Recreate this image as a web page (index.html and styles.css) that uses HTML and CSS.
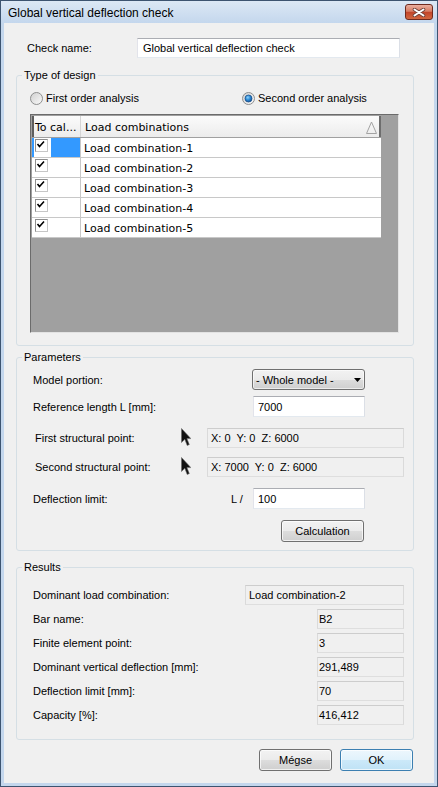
FILE: index.html
```html
<!DOCTYPE html>
<html lang="en">
<head>
  <meta charset="UTF-8">
  <meta name="viewport" content="width=device-width, initial-scale=1.0">
  <title>Global vertical deflection check</title>
  <link rel="stylesheet" href="styles.css">
</head>
<body>

  <div class="window">

    <!-- Title bar -->
    <div class="titlebar">
      <span class="title">Global vertical deflection check</span>
      <span class="close-btn">
        <svg width="14" height="9" viewBox="0 0 14 9">
          <path d="M2.5 1.5 L11.5 7.5 M11.5 1.5 L2.5 7.5" stroke="#6b4038" stroke-width="3.6" stroke-linecap="round"/>
          <path d="M2.5 1.5 L11.5 7.5 M11.5 1.5 L2.5 7.5" stroke="#fff" stroke-width="2" stroke-linecap="round"/>
        </svg>
      </span>
    </div>

    <div class="client">

      <!-- Check name -->
      <div class="name-row">
        <span class="name-label">Check name:</span>
        <div class="textbox name-box">Global vertical deflection check</div>
      </div>

      <!-- Type of design -->
      <div class="group design-group">
        <div class="group-title">Type of design</div>
        <div class="radio-row">
          <label class="radio-option first-radio">
            <svg width="13" height="13" viewBox="0 0 13 13">
              <defs>
                <linearGradient id="radioFill" x1="0" y1="0" x2="1" y2="1">
                  <stop offset="0" stop-color="#cfcfcf"/>
                  <stop offset="1" stop-color="#fbfbfb"/>
                </linearGradient>
              </defs>
              <circle cx="6.5" cy="6.5" r="6" fill="url(#radioFill)" stroke="#8e8f8f"/>
            </svg>
            First order analysis
          </label>
          <label class="radio-option">
            <svg width="13" height="13" viewBox="0 0 13 13">
              <defs>
                <radialGradient id="radioDot" cx="0.4" cy="0.35" r="0.7">
                  <stop offset="0" stop-color="#8fd3fb"/>
                  <stop offset="0.5" stop-color="#2c8ad6"/>
                  <stop offset="1" stop-color="#104f93"/>
                </radialGradient>
              </defs>
              <circle cx="6.5" cy="6.5" r="6" fill="url(#radioFill)" stroke="#8e8f8f"/>
              <circle cx="6.5" cy="6.5" r="3.5" fill="url(#radioDot)" stroke="#1b4f8a" stroke-width="0.8"/>
            </svg>
            Second order analysis
          </label>
        </div>

        <div class="grid">
          <div class="grid-header">
            <div class="col-check">To cal...</div>
            <div class="col-name">
              Load combinations
              <svg class="sort-arrow" width="11" height="13" viewBox="0 0 11 13">
                <polygon points="5.5,1 10.5,12.5 0.5,12.5" fill="none" stroke="#a3a3a3"/>
              </svg>
            </div>
          </div>

          <div class="grid-row selected">
            <div class="col-check">
              <span class="checkbox"><svg width="11" height="11" viewBox="0 0 11 11"><path d="M1.5 4 L3.5 6.5 L8 1.5" fill="none" stroke="#000" stroke-width="1.6"/></svg></span>
              <span class="sel-mark"></span>
            </div>
            <div class="col-name">Load combination-1</div>
          </div>
          <div class="grid-row">
            <div class="col-check">
              <span class="checkbox"><svg width="11" height="11" viewBox="0 0 11 11"><path d="M1.5 4 L3.5 6.5 L8 1.5" fill="none" stroke="#000" stroke-width="1.6"/></svg></span>
            </div>
            <div class="col-name">Load combination-2</div>
          </div>
          <div class="grid-row">
            <div class="col-check">
              <span class="checkbox"><svg width="11" height="11" viewBox="0 0 11 11"><path d="M1.5 4 L3.5 6.5 L8 1.5" fill="none" stroke="#000" stroke-width="1.6"/></svg></span>
            </div>
            <div class="col-name">Load combination-3</div>
          </div>
          <div class="grid-row">
            <div class="col-check">
              <span class="checkbox"><svg width="11" height="11" viewBox="0 0 11 11"><path d="M1.5 4 L3.5 6.5 L8 1.5" fill="none" stroke="#000" stroke-width="1.6"/></svg></span>
            </div>
            <div class="col-name">Load combination-4</div>
          </div>
          <div class="grid-row">
            <div class="col-check">
              <span class="checkbox"><svg width="11" height="11" viewBox="0 0 11 11"><path d="M1.5 4 L3.5 6.5 L8 1.5" fill="none" stroke="#000" stroke-width="1.6"/></svg></span>
            </div>
            <div class="col-name">Load combination-5</div>
          </div>
        </div>
      </div>

      <!-- Parameters -->
      <div class="group param-group">
        <div class="group-title">Parameters</div>

        <div class="param-row model-row">
          <span class="param-label">Model portion:</span>
          <div class="dropdown">
            - Whole model -
            <svg class="drop-arrow" width="7" height="4" viewBox="0 0 7 4"><polygon points="0,0 7,0 3.5,4" fill="#000"/></svg>
          </div>
        </div>

        <div class="param-row length-row">
          <span class="param-label">Reference length L [mm]:</span>
          <div class="textbox short-input">7000</div>
        </div>

        <div class="param-row point-row first-point">
          <span class="param-label">First structural point:</span>
          <span class="pick-icon">
            <svg width="10" height="19" viewBox="0 0 10 19"><polygon points="0.5,0.5 0.5,14.5 3.8,11.3 6.2,17.5 8.3,16.6 5.9,10.6 9.8,10.6" fill="#111" stroke="#6a6a6a" stroke-width="0.6"/></svg>
          </span>
          <div class="readonly point-box">X: 0  Y: 0  Z: 6000</div>
        </div>

        <div class="param-row point-row second-point">
          <span class="param-label">Second structural point:</span>
          <span class="pick-icon">
            <svg width="10" height="19" viewBox="0 0 10 19"><polygon points="0.5,0.5 0.5,14.5 3.8,11.3 6.2,17.5 8.3,16.6 5.9,10.6 9.8,10.6" fill="#111" stroke="#6a6a6a" stroke-width="0.6"/></svg>
          </span>
          <div class="readonly point-box">X: 7000  Y: 0  Z: 6000</div>
        </div>

        <div class="param-row limit-row">
          <span class="param-label">Deflection limit:</span>
          <span class="l-prefix">L /</span>
          <div class="textbox short-input">100</div>
        </div>

        <div class="param-row calc-row">
          <div class="button calc-btn">Calculation</div>
        </div>
      </div>

      <!-- Results -->
      <div class="group results-group">
        <div class="group-title">Results</div>
        <div class="result-list">
          <div class="result-row">
            <span>Dominant load combination:</span>
            <div class="readonly wide">Load combination-2</div>
          </div>
          <div class="result-row">
            <span>Bar name:</span>
            <div class="readonly narrow">B2</div>
          </div>
          <div class="result-row">
            <span>Finite element point:</span>
            <div class="readonly narrow">3</div>
          </div>
          <div class="result-row">
            <span>Dominant vertical deflection [mm]:</span>
            <div class="readonly narrow">291,489</div>
          </div>
          <div class="result-row">
            <span>Deflection limit [mm]:</span>
            <div class="readonly narrow">70</div>
          </div>
          <div class="result-row">
            <span>Capacity [%]:</span>
            <div class="readonly narrow">416,412</div>
          </div>
        </div>
      </div>

      <!-- Dialog buttons -->
      <div class="button-row">
        <div class="button">Mégse</div>
        <div class="button default">OK</div>
      </div>

    </div>
  </div>

</body>
</html>
```

FILE: styles.css
```css
/* Reset */
* {
  margin: 0;
  padding: 0;
  box-sizing: border-box;
}

body {
  font-family: "Liberation Sans", Arial, sans-serif;
  font-size: 11px;
  color: #000;
  background: #f0f0f0;
}

/* Window frame */
.window {
  width: 438px;
  height: 787px;
  display: flex;
  flex-direction: column;
  border: 1px solid #3d5470;
  background: #c4d7ed;
  padding: 0 3px 3px;
}

.titlebar {
  height: 22px;
  flex-shrink: 0;
  margin: 0 -3px;
  padding: 0 4px 0 7px;
  display: flex;
  justify-content: space-between;
  align-items: flex-start;
  background: linear-gradient(#dce8f5, #c4d7ed);
}

.title {
  font-size: 12px;
  line-height: 24px;
}

.close-btn {
  width: 28px;
  height: 16px;
  margin-top: 3px;
  border: 1px solid #6e2a1e;
  border-radius: 3px;
  background: linear-gradient(#eab0a0, #d77c63 45%, #c2452a 52%, #d2673f);
  display: flex;
  align-items: center;
  justify-content: center;
}

.client {
  flex: 1;
  background: #f0f0f0;
  padding: 15px 21px 0 12px;
  display: flex;
  flex-direction: column;
}

/* Inputs */
.textbox {
  background: #fff;
  border: 1px solid;
  border-color: #abadb3 #dbdfe6 #e3e9ef #e2e3ea;
  padding-left: 4px;
  display: flex;
  align-items: center;
}

.readonly {
  background: #f0f0f0;
  border: 1px solid;
  border-color: #cdcdcd #dadada #dedede #dadada;
  padding-left: 3px;
  display: flex;
  align-items: center;
  white-space: pre;
}

.readonly.wide {
  width: 159px;
}

.readonly.narrow {
  width: 87px;
  padding-left: 1px;
}

.button {
  height: 22px;
  border: 1px solid #707070;
  border-radius: 3px;
  background: linear-gradient(#f2f2f2 0%, #ebebeb 50%, #dddddd 50%, #cfcfcf 100%);
  box-shadow: inset 0 0 0 1px rgba(255, 255, 255, 0.7);
  display: flex;
  align-items: center;
  justify-content: center;
}

.button.default {
  border-color: #3c7fb1;
  background: linear-gradient(#edf7fd 0%, #e0f2fc 50%, #cce9f9 50%, #bfe2f5 100%);
}

/* Check name */
.name-row {
  display: flex;
  align-items: center;
  height: 20px;
  flex-shrink: 0;
}

.name-label {
  width: 110px;
  margin-left: 11px;
}

.name-box {
  width: 263px;
  height: 20px;
  padding-left: 5px;
}

/* Group boxes */
.group {
  width: 398px;
  flex-shrink: 0;
  border: 1px solid #d5dfe5;
  border-radius: 3px;
}

.group-title {
  width: max-content;
  margin: -7px 0 0 5px;
  padding: 0 2px;
  line-height: 13px;
  background: #f0f0f0;
}

.design-group {
  margin-top: 17px;
  height: 271px;
}

.radio-row {
  display: flex;
  align-items: center;
  height: 13px;
  margin: 10px 0 0 13px;
}

.radio-option {
  display: flex;
  align-items: center;
  gap: 3px;
  line-height: 13px;
}

.first-radio {
  width: 212px;
}

/* Load combination grid */
.grid {
  width: 369px;
  height: 219px;
  margin: 9px 0 0 13px;
  border: 1px solid;
  border-color: #6b6b6b #e3e3e3 #e3e3e3 #6b6b6b;
  padding: 1px;
  background: #a0a0a0;
  font-family: "DejaVu Sans", sans-serif;
  font-size: 11px;
}

.grid-header {
  display: flex;
  width: 349px;
  height: 22px;
  border-bottom: 1px solid #a0a0a0;
  background: linear-gradient(#fbfbfb, #ececec);
}

.grid-header .col-check {
  width: 49px;
  border-left: 2px solid #5d5d5d;
  border-right: 1px solid #d5d5d5;
  padding: 2px 0 0 1px;
  display: flex;
  align-items: center;
}

.grid-header .col-name {
  flex: 1;
  padding: 2px 0 0 4px;
  border-right: 2px solid #6d6d6d;
  display: flex;
  align-items: center;
}

.sort-arrow {
  margin-left: auto;
  margin-right: 2px;
}

.grid-row {
  display: flex;
  width: 349px;
  height: 20px;
  background: #fff;
  border-bottom: 1px solid #c8c8c8;
}

.grid-row .col-check {
  width: 49px;
  border-left: 2px solid #fff;
  border-right: 1px solid #c8c8c8;
  display: flex;
  align-items: flex-start;
}

.grid-row.selected .col-check {
  border-left-color: #3399ff;
}

.grid-row .col-name {
  flex: 1;
  padding: 2px 0 0 3px;
  display: flex;
  align-items: center;
}

.checkbox {
  width: 13px;
  height: 13px;
  margin: 1px 0 0 1px;
  border: 1px solid;
  border-color: #8e8e8e #c6c6c6 #c6c6c6 #8e8e8e;
  background: #fff;
  display: flex;
}

.sel-mark {
  flex: 1;
  align-self: stretch;
  margin-left: 3px;
  background: #3399ff;
}

/* Parameters */
.param-group {
  margin-top: 11px;
  height: 194px;
}

.param-row {
  display: flex;
  align-items: center;
  padding-left: 16px;
}

.model-row {
  margin-top: 5px;
  height: 21px;
}

.model-row .param-label {
  width: 219px;
}

.length-row {
  margin-top: 6px;
  height: 21px;
}

.length-row .param-label {
  width: 220px;
}

.short-input {
  width: 112px;
  height: 21px;
}

.dropdown {
  width: 113px;
  height: 21px;
  border: 1px solid #707070;
  border-radius: 3px;
  background: linear-gradient(#f2f2f2 0%, #ebebeb 50%, #dddddd 50%, #cfcfcf 100%);
  box-shadow: inset 0 0 0 1px rgba(255, 255, 255, 0.6);
  padding-left: 3px;
  display: flex;
  align-items: center;
}

.drop-arrow {
  margin-left: auto;
  margin-right: 3px;
}

.point-row {
  padding-left: 18px;
  height: 20px;
}

.point-row .param-label {
  width: 146px;
}

.first-point {
  margin-top: 11px;
}

.second-point {
  margin-top: 9px;
}

.pick-icon {
  width: 26px;
  align-self: flex-start;
  display: flex;
}

.point-box {
  width: 197px;
  height: 20px;
}

.limit-row {
  margin-top: 11px;
  height: 21px;
}

.limit-row .param-label {
  width: 198px;
}

.l-prefix {
  width: 22px;
}

.calc-row {
  margin-top: 11px;
  padding-left: 264px;
}

.calc-btn {
  width: 83px;
}

/* Results */
.results-group {
  margin-top: 16px;
  height: 173px;
}

.result-list {
  margin-top: 11px;
  padding: 0 9px 0 16px;
  display: flex;
  flex-direction: column;
  gap: 4px;
}

.result-row {
  display: flex;
  justify-content: space-between;
  align-items: center;
  height: 20px;
}

.result-row .readonly {
  height: 20px;
}

/* Dialog buttons */
.button-row {
  margin-top: 9px;
  display: flex;
  justify-content: flex-end;
  gap: 8px;
}

.button-row .button {
  width: 73px;
}
```
